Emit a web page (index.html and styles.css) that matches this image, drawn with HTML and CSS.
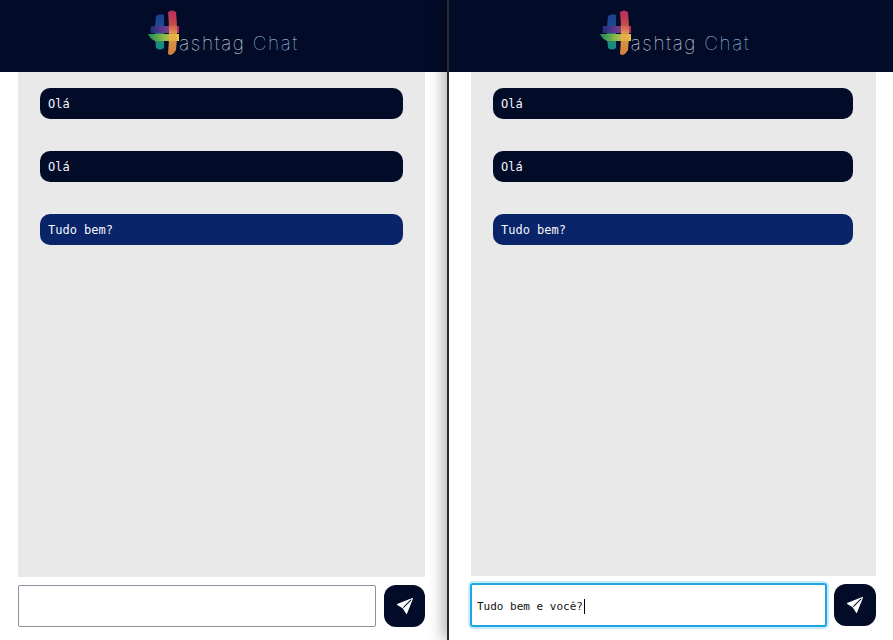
FILE: index.html
```html
<!DOCTYPE html>
<html lang="pt-BR">
<head>
<meta charset="utf-8">
<title>Hashtag Chat</title>
<link rel="stylesheet" href="styles.css">
</head>
<body>
<svg class="defs" width="0" height="0" aria-hidden="true">
  <defs>
    <linearGradient id="gLeft" x1="0" y1="0" x2="0" y2="1">
      <stop offset="0" stop-color="#1c3f8f"/><stop offset=".45" stop-color="#1d4f92"/><stop offset=".6" stop-color="#2b8f5f"/><stop offset="1" stop-color="#128a8a"/>
    </linearGradient>
    <linearGradient id="gRight" x1="0" y1="0" x2="0" y2="1">
      <stop offset="0" stop-color="#d12f63"/><stop offset=".3" stop-color="#d8504f"/><stop offset=".55" stop-color="#e8b04a"/><stop offset="1" stop-color="#ee8a3c"/>
    </linearGradient>
    <linearGradient id="gTop" x1="0" y1="0" x2="1" y2="0">
      <stop offset="0" stop-color="#1c2f7f"/><stop offset=".5" stop-color="#6a3a8e"/><stop offset="1" stop-color="#b82d6f"/>
    </linearGradient>
    <linearGradient id="gBot" x1="0" y1="0" x2="1" y2="0">
      <stop offset="0" stop-color="#148a5a"/><stop offset=".5" stop-color="#8fb84a"/><stop offset="1" stop-color="#e8c63f"/>
    </linearGradient>
    <symbol id="logo" viewBox="0 0 32 46">
      <path d="M8 6 Q12 3 16 5 L16 38 Q12 41 8 38 Q6 22 8 6Z" fill="url(#gLeft)"/>
      <path d="M3 16 L31 16 L31 23 L3 23 Q2 20 3 16Z" fill="url(#gTop)"/>
      <path d="M0 24 L31 24 L31 31 L7 31 Q2 29 0 24Z" fill="url(#gBot)"/>
      <path d="M20 2 Q24 -1 28 2 Q30 22 28 40 Q24 47 20 44 Q22 22 20 2Z" fill="url(#gRight)" opacity=".9"/>
    </symbol>
    <symbol id="plane" viewBox="0 0 16 16">
      <path d="M15.964.686a.5.5 0 0 0-.65-.65L.767 5.855H.766l-.452.18a.5.5 0 0 0-.082.887l.41.26.001.002 4.995 3.178 3.178 4.995.002.002.26.41a.5.5 0 0 0 .886-.083zm-1.833 1.89L6.637 10.07l-.215-.338a.5.5 0 0 0-.154-.154l-.338-.215 7.494-7.494 1.178-.471z" fill="#fff"/>
    </symbol>
  </defs>
</svg>
<main class="split">
  <section class="pane pane-left">
    <header class="top">
      <div class="brand">
        <svg class="logo"><use href="#logo"/></svg>
        <span class="word">ashtag <span class="word-accent">Chat</span></span>
      </div>
    </header>
    <div class="body body-left">
      <div class="feed">
        <div class="msg">Olá</div>
        <div class="msg">Olá</div>
        <div class="msg msg-own">Tudo bem?</div>
      </div>
      <form class="composer">
        <input class="field" type="text" aria-label="Mensagem">
        <button class="send" type="button" aria-label="Enviar"><svg class="plane"><use href="#plane"/></svg></button>
      </form>
    </div>
  </section>
  <section class="pane pane-right">
    <header class="top">
      <div class="brand">
        <svg class="logo"><use href="#logo"/></svg>
        <span class="word">ashtag <span class="word-accent">Chat</span></span>
      </div>
    </header>
    <div class="body body-right">
      <div class="feed">
        <div class="msg">Olá</div>
        <div class="msg">Olá</div>
        <div class="msg msg-own">Tudo bem?</div>
      </div>
      <form class="composer">
        <div class="field field-focus">Tudo bem e você?<span class="caret"></span></div>
        <button class="send" type="button" aria-label="Enviar"><svg class="plane"><use href="#plane"/></svg></button>
      </form>
    </div>
  </section>
</main>
</body>
</html>
```
FILE: styles.css
```css
* { box-sizing: border-box; }
html, body { margin: 0; height: 100%; overflow: hidden; background: #fff; }
.defs { position: absolute; }
.split { display: grid; grid-template-columns: 447px 446px; height: 640px; }
.pane { display: flex; flex-direction: column; height: 640px; min-width: 0; }
.pane-right {
  border-left: 2px solid #2a2a2e;
  box-shadow: -4px 0 14px rgba(0, 0, 0, .3);
  background: #fff;
  position: relative;
}
.top {
  height: 72px;
  flex: none;
  background: #020c29;
  display: flex;
  justify-content: center;
}
.pane-right .top { padding-left: 8px; }
.brand { display: flex; align-items: flex-start; margin-top: 10px; }
.logo { width: 32px; height: 46px; display: block; }
.word {
  font-family: "Inter", sans-serif;
  font-weight: 100;
  font-size: 19px;
  line-height: 24px;
  letter-spacing: 1.7px;
  color: #eef1f6;
  margin-top: 22px;
  margin-left: -1px;
  white-space: pre;
}
.word-accent { color: #b4dcfa; }
.body { flex: 1; display: flex; flex-direction: column; min-height: 0; }
.body-left { padding: 0 22px 13px 18px; }
.body-right { padding: 0 17px 13px 22px; }
.feed {
  flex: 1;
  background: #e9e9e9;
  padding: 16px 22px;
  display: flex;
  flex-direction: column;
  gap: 32px;
}
.body-right .feed { padding-right: 23px; }
.msg {
  height: 31px;
  flex: none;
  border-radius: 10px;
  background: #020c29;
  color: #f4f6fb;
  font-family: "DejaVu Sans Mono", monospace;
  font-size: 12px;
  line-height: 32px;
  padding-left: 8px;
}
.msg-own { background: #0a246a; }
.composer { display: flex; align-items: center; gap: 8px; margin-top: 8px; flex: none; }
.body-right .composer { gap: 7px; margin-top: 7px; }
.field {
  flex: 1;
  min-width: 0;
  height: 42px;
  background: #fff;
  border: 1px solid #8f8f9d;
  border-radius: 2px;
  padding: 0;
  margin: 0;
  outline: none;
  font-family: "DejaVu Sans Mono", monospace;
  font-size: 11px;
  color: #111;
}
.field-focus {
  display: flex;
  align-items: center;
  height: 44px;
  margin-left: -1px;
  border: 2px solid #1fa5e3;
  box-shadow: 0 0 0 2px #c6ecff;
  border-radius: 3px;
  padding: 2px 0 0 5px;
}
.caret { width: 1px; height: 15px; background: #000; margin-left: 1px; }
.send {
  width: 41px;
  height: 42px;
  flex: none;
  border: 0;
  padding: 0;
  border-radius: 12px;
  background: #020c29;
  display: flex;
  align-items: center;
  justify-content: center;
}
.body-right .send { width: 42px; }
.plane { width: 16px; height: 16px; display: block; }
```
